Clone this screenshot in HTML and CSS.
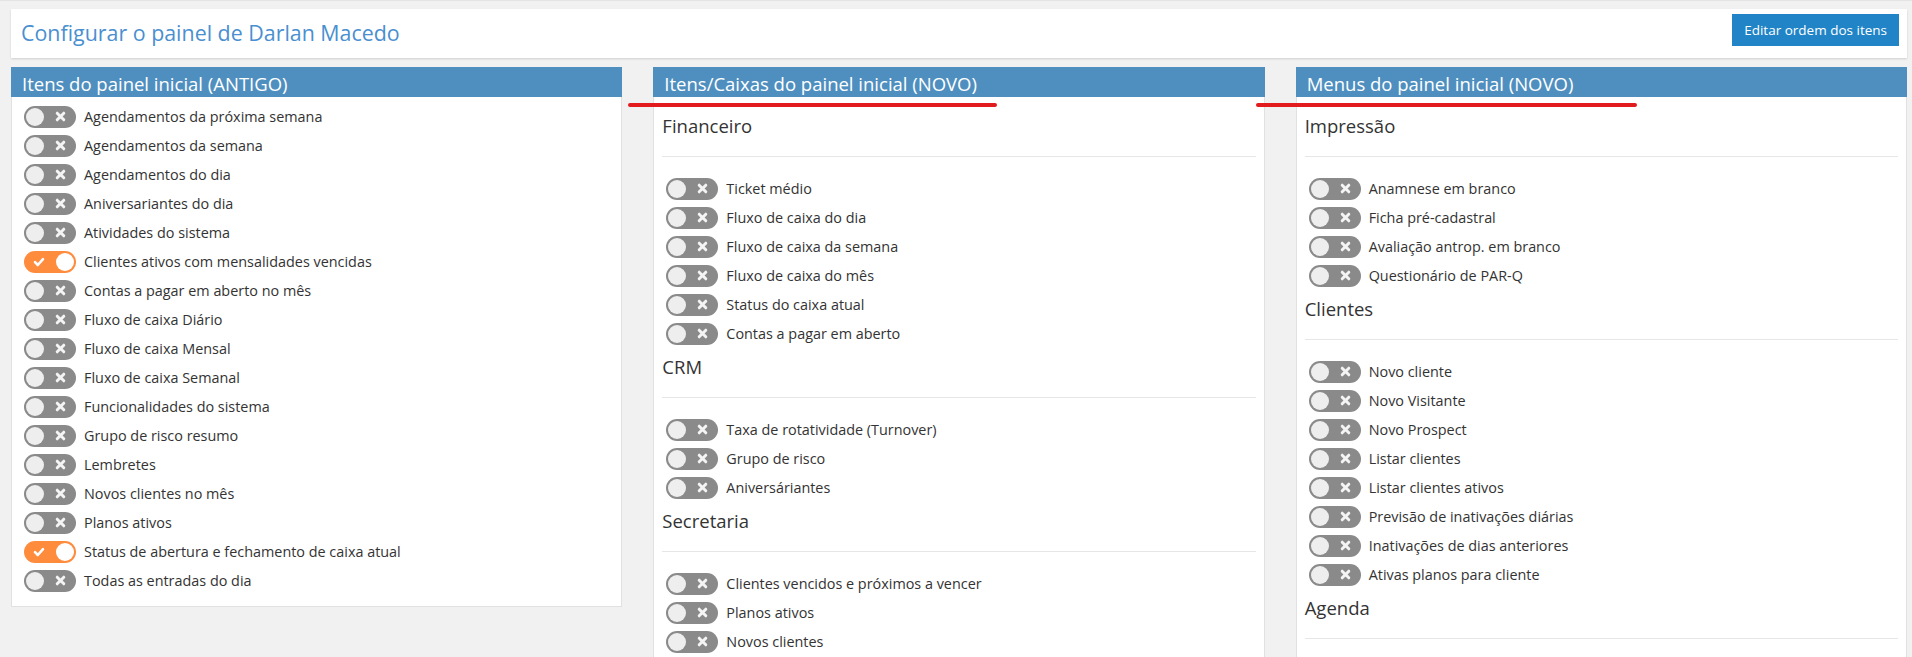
FILE: index.html
```html
<!DOCTYPE html>
<html lang="pt-BR">
<head>
    <meta charset="UTF-8">
    <meta name="viewport" content="width=device-width, initial-scale=1.0">
    <title>Configurar o painel</title>
    <link rel="stylesheet" href="styles.css">
</head>
<body>
    <svg class="defs" width="0" height="0">
        <symbol id="icon-x" viewBox="0 0 10 10">
            <path d="M2 2 L8 8 M8 2 L2 8" stroke="currentColor" stroke-width="2.7" stroke-linecap="round" fill="none"/>
        </symbol>
        <symbol id="icon-check" viewBox="0 0 12 10">
            <path d="M2 5.2 L4.8 8 L10 2.2" stroke="currentColor" stroke-width="2.6" stroke-linecap="round" stroke-linejoin="round" fill="none"/>
        </symbol>
    </svg>

    <div class="topbar">
        <h1>Configurar o painel de Darlan Macedo</h1>
        <button class="btn">Editar ordem dos itens</button>
    </div>

    <div class="columns">
        <!-- painel antigo -->
        <div class="panel">
            <h2 class="panel-title">Itens do painel inicial (ANTIGO)</h2>
            <div class="panel-body list">
                <label class="item"><span class="switch"><span class="knob"></span><svg class="mark"><use href="#icon-x"/></svg></span>Agendamentos da próxima semana</label>
                <label class="item"><span class="switch"><span class="knob"></span><svg class="mark"><use href="#icon-x"/></svg></span>Agendamentos da semana</label>
                <label class="item"><span class="switch"><span class="knob"></span><svg class="mark"><use href="#icon-x"/></svg></span>Agendamentos do dia</label>
                <label class="item"><span class="switch"><span class="knob"></span><svg class="mark"><use href="#icon-x"/></svg></span>Aniversariantes do dia</label>
                <label class="item"><span class="switch"><span class="knob"></span><svg class="mark"><use href="#icon-x"/></svg></span>Atividades do sistema</label>
                <label class="item"><span class="switch on"><svg class="mark"><use href="#icon-check"/></svg><span class="knob"></span></span>Clientes ativos com mensalidades vencidas</label>
                <label class="item"><span class="switch"><span class="knob"></span><svg class="mark"><use href="#icon-x"/></svg></span>Contas a pagar em aberto no mês</label>
                <label class="item"><span class="switch"><span class="knob"></span><svg class="mark"><use href="#icon-x"/></svg></span>Fluxo de caixa Diário</label>
                <label class="item"><span class="switch"><span class="knob"></span><svg class="mark"><use href="#icon-x"/></svg></span>Fluxo de caixa Mensal</label>
                <label class="item"><span class="switch"><span class="knob"></span><svg class="mark"><use href="#icon-x"/></svg></span>Fluxo de caixa Semanal</label>
                <label class="item"><span class="switch"><span class="knob"></span><svg class="mark"><use href="#icon-x"/></svg></span>Funcionalidades do sistema</label>
                <label class="item"><span class="switch"><span class="knob"></span><svg class="mark"><use href="#icon-x"/></svg></span>Grupo de risco resumo</label>
                <label class="item"><span class="switch"><span class="knob"></span><svg class="mark"><use href="#icon-x"/></svg></span>Lembretes</label>
                <label class="item"><span class="switch"><span class="knob"></span><svg class="mark"><use href="#icon-x"/></svg></span>Novos clientes no mês</label>
                <label class="item"><span class="switch"><span class="knob"></span><svg class="mark"><use href="#icon-x"/></svg></span>Planos ativos</label>
                <label class="item"><span class="switch on"><svg class="mark"><use href="#icon-check"/></svg><span class="knob"></span></span>Status de abertura e fechamento de caixa atual</label>
                <label class="item"><span class="switch"><span class="knob"></span><svg class="mark"><use href="#icon-x"/></svg></span>Todas as entradas do dia</label>
            </div>
        </div>

        <!-- caixas novas -->
        <div class="panel">
            <h2 class="panel-title">Itens/Caixas do painel inicial (NOVO)</h2>
            <div class="panel-body groups">
                <h3>Financeiro</h3>
                <hr>
                <label class="item"><span class="switch"><span class="knob"></span><svg class="mark"><use href="#icon-x"/></svg></span>Ticket médio</label>
                <label class="item"><span class="switch"><span class="knob"></span><svg class="mark"><use href="#icon-x"/></svg></span>Fluxo de caixa do dia</label>
                <label class="item"><span class="switch"><span class="knob"></span><svg class="mark"><use href="#icon-x"/></svg></span>Fluxo de caixa da semana</label>
                <label class="item"><span class="switch"><span class="knob"></span><svg class="mark"><use href="#icon-x"/></svg></span>Fluxo de caixa do mês</label>
                <label class="item"><span class="switch"><span class="knob"></span><svg class="mark"><use href="#icon-x"/></svg></span>Status do caixa atual</label>
                <label class="item"><span class="switch"><span class="knob"></span><svg class="mark"><use href="#icon-x"/></svg></span>Contas a pagar em aberto</label>

                <h3>CRM</h3>
                <hr>
                <label class="item"><span class="switch"><span class="knob"></span><svg class="mark"><use href="#icon-x"/></svg></span>Taxa de rotatividade (Turnover)</label>
                <label class="item"><span class="switch"><span class="knob"></span><svg class="mark"><use href="#icon-x"/></svg></span>Grupo de risco</label>
                <label class="item"><span class="switch"><span class="knob"></span><svg class="mark"><use href="#icon-x"/></svg></span>Aniversáriantes</label>

                <h3>Secretaria</h3>
                <hr>
                <label class="item"><span class="switch"><span class="knob"></span><svg class="mark"><use href="#icon-x"/></svg></span>Clientes vencidos e próximos a vencer</label>
                <label class="item"><span class="switch"><span class="knob"></span><svg class="mark"><use href="#icon-x"/></svg></span>Planos ativos</label>
                <label class="item"><span class="switch"><span class="knob"></span><svg class="mark"><use href="#icon-x"/></svg></span>Novos clientes</label>
            </div>
        </div>

        <!-- menus novos -->
        <div class="panel">
            <h2 class="panel-title">Menus do painel inicial (NOVO)</h2>
            <div class="panel-body groups">
                <h3>Impressão</h3>
                <hr>
                <label class="item"><span class="switch"><span class="knob"></span><svg class="mark"><use href="#icon-x"/></svg></span>Anamnese em branco</label>
                <label class="item"><span class="switch"><span class="knob"></span><svg class="mark"><use href="#icon-x"/></svg></span>Ficha pré-cadastral</label>
                <label class="item"><span class="switch"><span class="knob"></span><svg class="mark"><use href="#icon-x"/></svg></span>Avaliação antrop. em branco</label>
                <label class="item"><span class="switch"><span class="knob"></span><svg class="mark"><use href="#icon-x"/></svg></span>Questionário de PAR-Q</label>

                <h3>Clientes</h3>
                <hr>
                <label class="item"><span class="switch"><span class="knob"></span><svg class="mark"><use href="#icon-x"/></svg></span>Novo cliente</label>
                <label class="item"><span class="switch"><span class="knob"></span><svg class="mark"><use href="#icon-x"/></svg></span>Novo Visitante</label>
                <label class="item"><span class="switch"><span class="knob"></span><svg class="mark"><use href="#icon-x"/></svg></span>Novo Prospect</label>
                <label class="item"><span class="switch"><span class="knob"></span><svg class="mark"><use href="#icon-x"/></svg></span>Listar clientes</label>
                <label class="item"><span class="switch"><span class="knob"></span><svg class="mark"><use href="#icon-x"/></svg></span>Listar clientes ativos</label>
                <label class="item"><span class="switch"><span class="knob"></span><svg class="mark"><use href="#icon-x"/></svg></span>Previsão de inativações diárias</label>
                <label class="item"><span class="switch"><span class="knob"></span><svg class="mark"><use href="#icon-x"/></svg></span>Inativações de dias anteriores</label>
                <label class="item"><span class="switch"><span class="knob"></span><svg class="mark"><use href="#icon-x"/></svg></span>Ativas planos para cliente</label>

                <h3>Agenda</h3>
                <hr>
            </div>
        </div>
    </div>

    <!-- marcações em vermelho -->
    <span class="marker marker-1"></span>
    <span class="marker marker-2"></span>
</body>
</html>
```

FILE: styles.css
```css
body {
    margin: 0;
    padding: 8px 5px 0 11px;
    border-top: 1px solid #e4e4e4;
    background-color: #f1f1f1;
    color: #333;
    font-family: "Open Sans", Arial, sans-serif;
    position: relative;
}

.defs {
    position: absolute;
}

/* barra do topo */
.topbar {
    display: flex;
    justify-content: space-between;
    align-items: flex-start;
    padding: 5px 8px 11px 10px;
    background-color: #fff;
    box-shadow: 0 1px 2px rgba(0, 0, 0, 0.14);
}

.topbar h1 {
    margin: 5px 0 0;
    font-size: 21.4px;
    font-weight: normal;
    line-height: 28px;
    color: #4a8fcf;
}

.btn {
    height: 32px;
    padding: 0 12px;
    font-family: "Open Sans", Arial, sans-serif;
    font-size: 13.5px;
    color: #fff;
    background-color: #2184c6;
    border: none;
    cursor: pointer;
}

/* colunas */
.columns {
    display: grid;
    grid-template-columns: repeat(3, 1fr);
    gap: 31px;
    align-items: start;
    margin-top: 9px;
}

.panel-title {
    margin: 0;
    height: 28px;
    padding: 2px 11px 0;
    font-size: 18.5px;
    font-weight: normal;
    line-height: 29px;
    color: #fff;
    background-color: #4f8fc0;
}

.panel-body {
    background-color: #fff;
    border: 1px solid #e1e1e1;
    border-top: none;
}

.list {
    padding: 5px 12px 11px;
}

.groups {
    padding: 10px 8px 60px;
}

.groups h3 {
    margin: 9px 0 0;
    font-size: 18.5px;
    font-weight: normal;
    line-height: 20px;
}

.groups hr {
    margin: 20px 0 17px;
    border: 0;
    border-top: 1px solid #e6e6e6;
}

.groups .item {
    margin-left: 4px;
}

/* linha com chave */
.item {
    display: flex;
    align-items: center;
    gap: 8px;
    height: 29px;
    font-size: 14.4px;
    cursor: pointer;
}

.switch {
    display: flex;
    align-items: center;
    justify-content: space-between;
    flex-shrink: 0;
    box-sizing: border-box;
    width: 52px;
    height: 22px;
    padding: 0 2px;
    border-radius: 11px;
    background-color: #8a8a8a;
}

.knob {
    width: 18px;
    height: 18px;
    border-radius: 50%;
    background-color: #eeeeee;
}

.mark {
    width: 11px;
    height: 11px;
    margin-right: 8px;
    color: #f4f4f4;
}

.switch.on {
    background-color: #ff8b3d;
}

.switch.on .knob {
    background-color: #fff;
}

.switch.on .mark {
    width: 12px;
    height: 10px;
    margin: 0 0 0 7px;
    color: #fff;
}

/* marcações vermelhas por cima */
.marker {
    position: absolute;
    top: 102px;
    height: 4px;
    border-radius: 2px;
    background-color: #e21b1f;
}

.marker-1 {
    left: 628px;
    width: 369px;
}

.marker-2 {
    left: 1256px;
    width: 381px;
}
```
